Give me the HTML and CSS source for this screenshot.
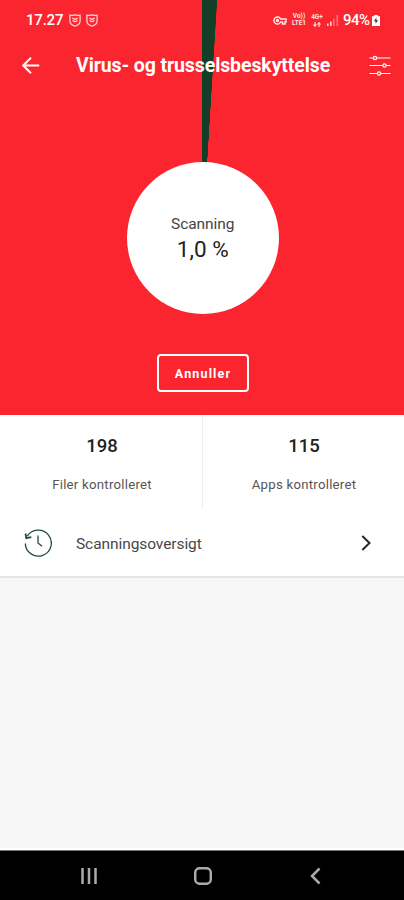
FILE: index.html
```
<!DOCTYPE html>
<html lang="da">
<head>
<meta charset="utf-8">
<title>Virus- og trusselsbeskyttelse</title>
<link rel="stylesheet" href="styles.css">
</head>
<body>
<div class="screen">
  <section class="hero">
    <div class="status">
      <span class="time">17.27</span>
      <svg class="shield" width="12" height="13" viewBox="0 0 13 14"><path d="M1 1.200Q3.700 2 6.500 1Q9.300 2 12 1.200V7.500Q12 11.500 6.500 13Q1 11.500 1 7.500Z"/><path d="M3.500 4.500Q5 5 6.500 6Q8 5 9.500 4.500M4 6.500Q6.500 10 9 6.500"/></svg>
      <svg class="shield" width="12" height="13" viewBox="0 0 13 14"><path d="M1 1.200Q3.700 2 6.500 1Q9.300 2 12 1.200V7.500Q12 11.500 6.500 13Q1 11.500 1 7.500Z"/><path d="M3.500 4.500Q5 5 6.500 6Q8 5 9.500 4.500M4 6.500Q6.500 10 9 6.500"/></svg>
      <span class="fill"></span>
      <svg class="key" width="14" height="9" viewBox="0 0 14 9"><path d="M7.600 3A3.500 3.500 0 1 0 7.600 6H9.500V8H12V6H13V3Z"/><circle cx="4.500" cy="4.500" r="1"/></svg>
      <span class="net volte"><span>Vo))</span><span>LTE1</span></span>
      <span class="net lte"><span>4G+</span><svg width="8" height="5" viewBox="0 0 8 5"><path d="M2 0V4M.5 2.500L2 4.300L3.500 2.500M6 5V1M4.500 2.500L6 .7L7.500 2.500"/></svg></span>
      <svg class="signal" width="12" height="11" viewBox="0 0 12 11"><path d="M0 8.500h1.600V11H0zM3 6.500h1.600V11H3z"/><path class="dim" d="M6 3.500h1.600V11H6zM9.500 0h1.600v11H9.500z"/></svg>
      <span class="percent">94%</span>
      <svg class="battery" width="8" height="11" viewBox="0 0 8 11"><path fill="#fff" d="M2.300 0h3.400v1.200H8V11H0V1.200h2.300z"/><path fill="#203b34" d="M4.400 2.500L2 6.300h1.600v2.500L6 5.200H4.400z"/></svg>
    </div>
    <header class="appbar">
      <svg class="back" width="18" height="17" viewBox="0 0 18 17"><path d="M17.300 8.500H1.200M9 .8L1.200 8.500L9 16.200"/></svg>
      <h1>Virus- og trusselsbeskyttelse</h1>
      <svg class="tune" width="22" height="22" viewBox="0 0 22 22"><path d="M.5 3H4.500M7.500 3H21.500M.5 10.500H14M17 10.500H21.500M.5 18.500H8.500M11.500 18.500H21.500"/><circle cx="6" cy="3" r="1.600"/><circle cx="15.500" cy="10.500" r="1.600"/><circle cx="10" cy="18.500" r="1.600"/></svg>
    </header>
    <div class="dial">
      <span class="dial-label">Scanning</span>
      <span class="dial-value">1,0 %</span>
    </div>
    <button class="cancel">Annuller</button>
  </section>
  <section class="stats">
    <div class="stat"><b>198</b><span class="files">Filer kontrolleret</span></div>
    <div class="stat"><b>115</b><span class="apps">Apps kontrolleret</span></div>
  </section>
  <div class="row">
    <svg class="history" width="28" height="28" viewBox="0 0 28 28"><path d="M3.300 7.200A13 13 0 1 1 1.300 14.500"/><path d="M14 6.500V14L18 17.300"/><path class="tip" d="M1.500 4.500L2.300 9.200L7.300 8.200"/></svg>
    <span class="row-label">Scanningsoversigt</span>
    <svg class="chevron" width="10" height="16" viewBox="0 0 10 16"><path d="M1.300 1L8.500 8L1.300 15"/></svg>
  </div>
  <main class="blank"></main>
  <nav class="navbar">
    <svg width="18" height="18" viewBox="0 0 18 18"><path d="M2.500 1V17M9 1V17M15.500 1V17"/></svg>
    <svg width="18" height="18" viewBox="0 0 18 18"><rect x="1.200" y="1.200" width="15.600" height="15.600" rx="4.500"/></svg>
    <svg width="18" height="18" viewBox="0 0 18 18"><path d="M12.500 1.500L5 9L12.500 16.500"/></svg>
  </nav>
</div>
</body>
</html>
```
FILE: styles.css
```
* { box-sizing: border-box; }
body { margin: 0; font-family: Roboto, "Liberation Sans", sans-serif; }
svg { display: block; flex: none; fill: none; }
span, h1, b { white-space: nowrap; }
.screen { width: 404px; height: 900px; display: flex; flex-direction: column; background: #fff; overflow: hidden; }
.hero {
  height: 415px;
  flex: none;
  display: flex;
  flex-direction: column;
  align-items: center;
  color: #fff;
  background: conic-gradient(from 0deg at 202.500px 238px, #123f25 0 3.450deg, #fb252f 3.600deg 359.950deg, #123f25 360deg);
}
.status { width: 100%; height: 40px; padding: 0 24px 0 26px; display: flex; align-items: center; }
.time { width: 37px; font-size: 15px; font-weight: 500; letter-spacing: -.2px; }
.shield { margin-left: 5px; stroke: #ffd0d2; stroke-width: 1.400; }
.shield:first-of-type { margin-left: 6px; }
.fill { flex: 1; }
.key { stroke: #ffe5e5; stroke-width: 1.500; }
.net { display: flex; flex-direction: column; align-items: center; font-size: 6.500px; line-height: 7px; font-weight: 700; color: #ffe0e0; letter-spacing: 0; }
.net svg { margin-top: 1px; stroke: #ffe0e0; stroke-width: 1.100; }
.volte { width: 16px; margin-left: 4px; }
.lte { width: 14px; margin-left: 3px; }
.signal { margin-left: 3px; fill: #ffd0d2; }
.dim { fill: #fd7077; }
.percent { width: 28px; margin-left: 4px; font-size: 15px; font-weight: 500; letter-spacing: -.5px; }
.battery { margin-left: 1px; }
.appbar { width: 100%; height: 50px; padding: 0 13px 0 22px; display: flex; align-items: center; }
.back { stroke: #fff; stroke-width: 2; }
h1 { margin: 2px 0 0 36px; flex: 1; font-size: 19.500px; font-weight: 700; letter-spacing: -.1px; line-height: 24px; }
.tune { stroke: #fff; stroke-width: 1.200; margin-top: 1px; }
.dial {
  width: 152px; height: 152px; margin: 72px 0 0 1.500px; border-radius: 50%; background: #fff; color: #333;
  display: flex; flex-direction: column; align-items: center; padding-top: 52px;
}
.dial-label { font-size: 15.500px; line-height: 20px; color: #444; letter-spacing: -.05px; }
.dial-value { margin-top: 1px; font-size: 22.500px; line-height: 28px; color: #222; font-weight: 400; }
.cancel {
  width: 92px; height: 38px; margin: 40px 0 0 2px; padding: 1px 0 0; border: 2px solid #fff; border-radius: 4px;
  background: transparent; color: #fff; font: 700 12.500px/16px Roboto, sans-serif; letter-spacing: 1.150px;
}
.stats { height: 94px; flex: none; display: flex; }
.stat { flex: 1; display: flex; flex-direction: column; align-items: center; padding: 20px 0 0 2px; }
.stat + .stat { border-left: 1px solid #eee; padding-left: 1px; }
.stat b { font-size: 18.500px; line-height: 22px; font-weight: 500; color: #222; letter-spacing: 0; }
.stat span { margin-top: 19px; font-size: 13.200px; line-height: 18px; color: #555; letter-spacing: .25px; }
.row { height: 69px; flex: none; display: flex; align-items: center; padding: 0 33px 0 24px; border-bottom: 2px solid #e5e5e5; }
.history { stroke: #244a3c; stroke-width: 1.300; }
.tip { stroke-width: 1.800; }
.row-label { flex: 1; margin: 2px 0 0 24px; font-size: 15.500px; line-height: 20px; color: #484848; letter-spacing: -.08px; }
.chevron { stroke: #1b3029; stroke-width: 2; }
.blank { flex: 1; background: #f7f7f7; border-bottom: 2px solid #fff; }
.navbar { height: 50px; flex: none; background: #000; border-top: 1px solid #777; display: flex; justify-content: center; gap: 95.500px; align-items: center; padding-left: 1px; }
.navbar svg { stroke: #aaa; stroke-width: 2.500; }
```
